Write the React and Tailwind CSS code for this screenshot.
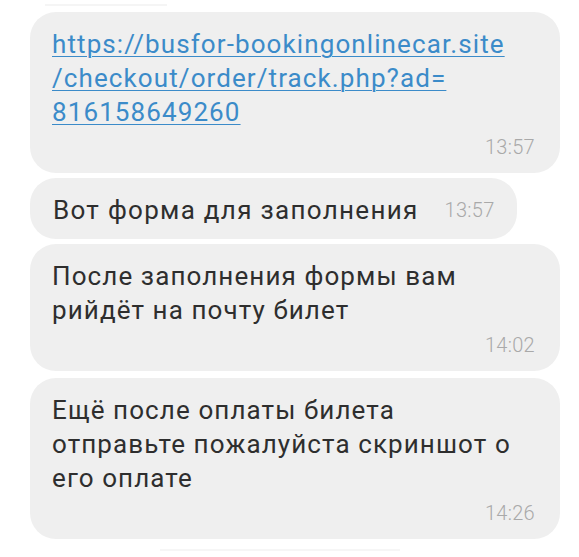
const messages = [
  {
    lines: ['https://busfor-bookingonlinecar.site', '/checkout/order/track.php?ad=', '816158649260'],
    time: '13:57',
    link: true,
  },
  { text: 'Вот форма для заполнения', time: '13:57', inline: true },
  { lines: ['После заполнения формы вам', 'рийдёт на почту билет'], time: '14:02' },
  { lines: ['Ещё после оплаты билета', 'отправьте пожалуйста скриншот о', 'его оплате'], time: '14:26' },
];

function Time({ children }) {
  return <span className="text-[20px] leading-[24px] font-light tracking-[0.3px] text-[#a9a9a9]">{children}</span>;
}

function Bubble({ msg }) {
  if (msg.inline) {
    return (
      <div className="self-start flex items-center gap-[26px] h-[61px] pl-[23px] pr-[22px] pt-[2px] rounded-[26px] bg-[#efefef]">
        <span className="text-[26px] leading-[34px] tracking-[1.3px] text-[#2e2e2e]">{msg.text}</span>
        <Time>{msg.time}</Time>
      </div>
    );
  }
  return (
    <div className="w-[530px] flex flex-col pt-[15px] pb-[12px] pl-[22px] pr-[25px] rounded-[26px] bg-[#efefef]">
      <div className="text-[26px] leading-[34px] tracking-[1.1px]">
        {msg.lines.map((l, i) =>
          msg.link ? (
            <div key={i} className="text-[#3b8bc9] underline underline-offset-[3px] decoration-[1px]">{l}</div>
          ) : (
            <div key={i} className="text-[#2e2e2e]">{l}</div>
          )
        )}
      </div>
      <div className="mt-[6px] self-end">
        <Time>{msg.time}</Time>
      </div>
    </div>
  );
}

export default function App() {
  return (
    <div className="w-[579px] h-[557px] bg-white overflow-hidden" style={{ fontFamily: 'Roboto, "Noto Sans", sans-serif' }}>
      <div className="ml-[45px] mt-[4px] h-[2px] w-[122px] bg-[#f5f5f5]" />
      <div className="flex flex-col gap-[5px] pl-[30px] pt-[6px]">
        {messages.map((m, i) => (
          <div key={i} className={i === 3 ? 'mt-[2px] flex flex-col' : 'flex flex-col'}>
            <Bubble msg={m} />
          </div>
        ))}
      </div>
      <div className="ml-[160px] mt-[10px] h-[2px] w-[240px] bg-[#f6f6f6]" />
    </div>
  );
}
